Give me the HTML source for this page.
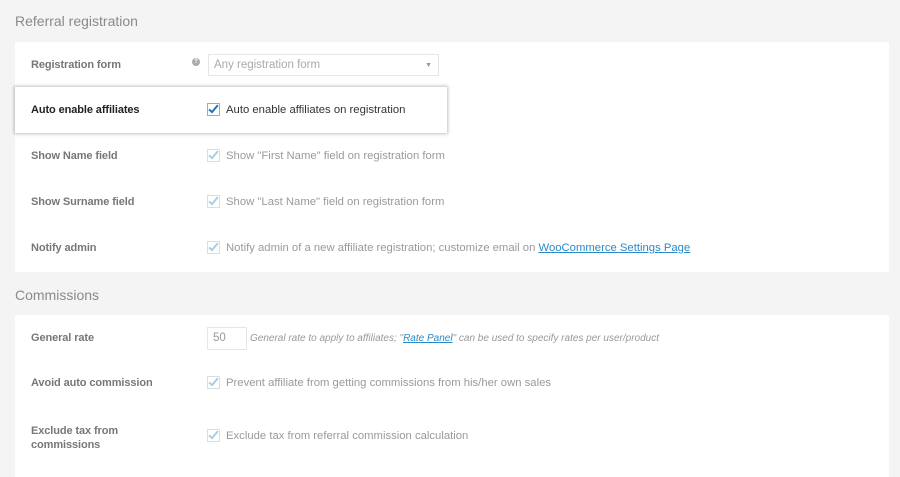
<!DOCTYPE html>
<html><head><style>
body{margin:0;width:900px;height:477px;background:#f4f4f4;font-family:"Liberation Sans",sans-serif;position:relative;overflow:hidden;color:#888}
.h{position:absolute;left:15px;font-size:14px;color:#8a8a8a}
.p{position:absolute;left:15px;width:874px;background:#fff}
.l{position:absolute;left:31px;font-size:11px;color:#777;font-weight:bold;letter-spacing:-0.1px}
.t{position:absolute;left:226px;font-size:11.3px;color:#9a9a9a;margin-top:1px}
.cb{position:absolute;left:207px;width:11px;height:11px;border:1px solid #ddd;background:#fff}
.cb:after{content:"";position:absolute;left:3px;top:-1px;width:3px;height:8px;border:solid #a9cde6;border-width:0 2px 2px 0;transform:rotate(40deg)}
.cb.on{border-color:#aaa}
.cb.on:after{border-color:#1e73be}
a{color:#2a8ac8;text-decoration:underline}
</style></head><body>
<div class="h" style="top:13px">Referral registration</div>
<div class="p" style="top:42px;height:230px"></div>
<div class="l" style="top:59px">Registration form</div>
<div style="position:absolute;left:192px;top:58px;width:8px;height:8px;border-radius:50%;background:#aaa;color:#fff;font-size:6px;line-height:8px;text-align:center;font-weight:bold">?</div>
<div style="position:absolute;left:208px;top:54px;width:229px;height:20px;border:1px solid #e6e6e6;font-size:11.5px;color:#aaa;line-height:21px;text-indent:5px">Any registration form<span style="position:absolute;right:6px;font-size:7px;color:#999">▼</span></div>
<div style="position:absolute;left:15px;top:87px;width:432px;height:46px;background:#fff;box-shadow:0 0 3px 1px rgba(0,0,0,0.25)"></div>
<div class="l" style="top:104px;color:#222">Auto enable affiliates</div>
<div class="cb on" style="top:103px"></div>
<div class="t" style="top:103px;color:#333">Auto enable affiliates on registration</div>
<div class="l" style="top:150px">Show Name field</div>
<div class="cb" style="top:149px"></div><div class="t" style="top:149px">Show "First Name" field on registration form</div>
<div class="l" style="top:196px">Show Surname field</div>
<div class="cb" style="top:195px"></div><div class="t" style="top:195px">Show "Last Name" field on registration form</div>
<div class="l" style="top:242px">Notify admin</div>
<div class="cb" style="top:241px"></div><div class="t" style="top:241px">Notify admin of a new affiliate registration; customize email on <a>WooCommerce Settings Page</a></div>
<div class="h" style="top:287px">Commissions</div>
<div class="p" style="top:315px;height:162px"></div>
<div class="l" style="top:332px">General rate</div>
<div style="position:absolute;left:207px;top:327px;width:38px;height:21px;border:1px solid #e6e6e6;font-size:11.5px;line-height:21px;text-indent:5px;color:#999">50</div>
<div style="position:absolute;left:250px;top:333px;font-size:10px;font-style:italic;color:#999">General rate to apply to affiliates; "<a>Rate Panel</a>" can be used to specify rates per user/product</div>
<div class="l" style="top:377px">Avoid auto commission</div>
<div class="cb" style="top:376px"></div><div class="t" style="top:376px">Prevent affiliate from getting commissions from his/her own sales</div>
<div class="l" style="top:424px;line-height:14px">Exclude tax from<br>commissions</div>
<div class="cb" style="top:429px"></div><div class="t" style="top:429px">Exclude tax from referral commission calculation</div>
</body></html>
